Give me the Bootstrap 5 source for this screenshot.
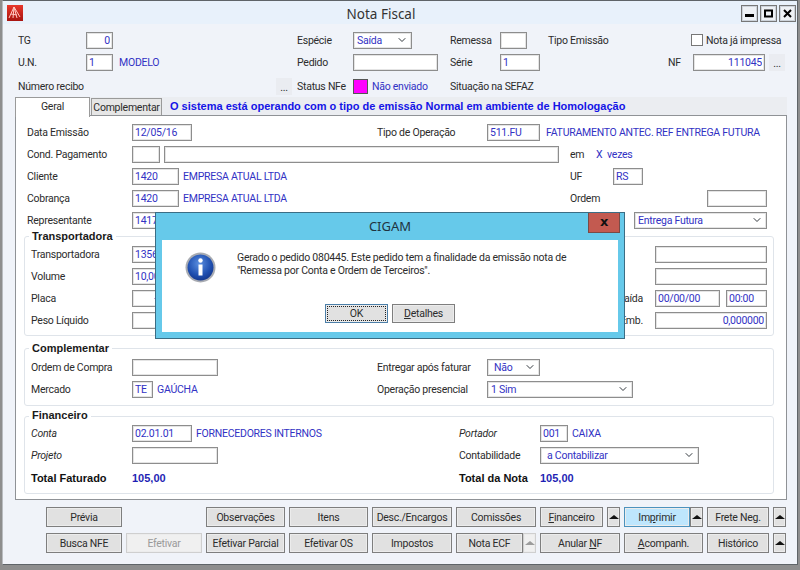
<!DOCTYPE html>
<html lang="pt-BR">
<head>
<meta charset="UTF-8" />
<meta name="viewport" content="width=device-width, initial-scale=1" />
<title>Nota Fiscal</title>
<link href="https://cdn.jsdelivr.net/npm/bootstrap@5.3.0/dist/css/bootstrap.min.css" rel="stylesheet" />
<style>
  body { margin: 0; width: 800px; height: 570px; overflow: hidden; background: #8e8e8e; font: 10.5px/14px Roboto, "Liberation Sans", sans-serif; letter-spacing: -.25px; color: #2c2c2c; }
  .nf-win { position: relative; width: 796px; height: 565px; margin-left: 2px; background: #f0f3f9; border: 1px solid #5f6468; border-left-color: #b9bcc0; overflow: hidden; }
  .nf-title { height: 23px; background: #e8f1fb; position: relative; }
  .nf-title h1 { margin: 0; font: 13.5px/26px "Noto Sans", sans-serif; letter-spacing: 0; color: #333; text-align: center; padding-right: 38px; }
  .nf-logo { position: absolute; left: 4px; top: 4px; }
  .nf-ctl { position: absolute; right: 1px; top: 4px; gap: 2px; }
  .nf-ctl span { width: 17px; height: 17px; border: 1px solid #777; box-shadow: inset 0 0 0 1px #cdd3da; background: #eef1f5; }
  .nf-top { padding: 5px 0 0 15px; }
  .nf-row { display: flex; align-items: center; height: 22px; padding-top: 2px; white-space: nowrap; }
  .nf-row > div { flex: none; }
  .nf-row-b { margin-top: 2px; }
  .blu { color: #3232c4; }
  .form-control.fld, .form-select.fld { flex: none; height: 17px; min-height: 0; margin-top: -2px; padding: 1px 2px 0; font: inherit; letter-spacing: inherit; line-height: 14px; color: #3232c4; border: 1px solid #8d8d8d; border-radius: 0; box-shadow: inset 0 0 0 1px #e4e4e4; background-color: #fff; }
  .form-select.fld { padding-left: 3px; background-size: 10px 8px; background-position: right 4px center; }
  .sel-in { padding-left: 6px !important; }
  .nf-ms6 { margin-left: 6px; }
  .nf-ms5 { margin-left: 5px; }
  .nf-dots { width: 16px; height: 17px; margin-top: -2px; text-align: center; line-height: 20px; background: #eaecf1; }
  .nf-mag { width: 15px; height: 15px; margin-top: -2px; background: #f0f; border: 1px solid #555; }
  .form-check-input.nf-chk { width: 12px; height: 12px; margin: -2px 3px 0 0; border-radius: 0; border-color: #777; float: none; }
  .nav-tabs.nf-tabs { height: 18px; margin-left: 12px; width: 772px; background: #ebedf1; border: 0; flex-wrap: nowrap; position: relative; z-index: 2; }
  .nf-tabs .nav-link { font-size: inherit; line-height: 15px; padding: 1px 0 0; color: #2c2c2c; text-align: center; background: #e6e6e6; border: 1px solid #9a9a9a; border-bottom: 0; border-radius: 0; height: 17px; margin: 1px 0 0 1px; width: 71px; }
  .nf-tabs .nav-link.active { background: #fff; width: 75px; height: 20px; margin: 0; border-color: #9a9a9a; padding-top: 1px; color: #2c2c2c; }
  .nf-msg { font: bold 11px/18px "Liberation Sans", sans-serif; letter-spacing: 0; color: #1414e6; margin-left: 8px; white-space: nowrap; }
  .nf-panel { margin-left: 12px; width: 772px; height: 385px; background: #fff; border: 1px solid #8f9296; padding: 5px 0 0 11px; }
  fieldset.nf-box { position: relative; margin: 5px 0 0 -3px; width: 750px; border: 1px solid #dfe4ea; border-radius: 3px; padding: 6px 0 4px 6px; }
  fieldset.nf-box + fieldset.nf-box { margin-top: 12px; }
  fieldset.nf-box + fieldset.nf-box.b3 { margin-top: 10px; padding-top: 5px; }
  .nf-box legend { position: absolute; left: 4px; top: -8px; width: auto; float: none; margin: 0; padding: 0 3px; background: #fff; font: bold 11px/14px "Liberation Sans", sans-serif; letter-spacing: 0; color: #1a1a1a; }
  .b3 legend { top: -9px; }
  .b2 { height: 58px; padding-top: 7px !important; }
  .b3 { height: 78px; }
  .tot { font: bold 11px/14px "Liberation Sans", sans-serif; letter-spacing: 0; color: #111; }
  .tot.blu { color: #1f1fb4; }
  .nf-btns { display: grid; grid-template-columns: 76px 76px 79px 79px 80px 80px 80px 79px 79px; column-gap: 4px; row-gap: 6px; margin: 7px 0 0 43px; }
  .btn.nf-b { height: 20px; padding: 0; font: inherit; letter-spacing: inherit; line-height: 17px; color: #2c2c2c; background: #e1e1e1; border: 1px solid #7e7e7e; border-radius: 0; box-shadow: inset 0 0 0 1px #ececec; white-space: nowrap; }
  .btn.nf-b.hot { background: #bee6fd; border-color: #4c92bd; }
  .btn.nf-b.dis { color: #9a9a9a; background: #f0f0f0; border-color: #cfcfcf; opacity: 1; }
  .btn.nf-b.arw { flex: none; width: 13px; display: flex; align-items: center; justify-content: center; }
  .nf-tri { width: 0; height: 0; border: 5px solid transparent; border-top: 0; border-bottom: 4px solid #111; }
  .dis .nf-tri { border-bottom-color: #9c9c9c; }
  u { text-decoration: underline; text-underline-offset: 1px; }
  /* dialogo sobre o formulario */
  .modal-content.nf-dlg { position: absolute; left: 152px; top: 211px; width: 470px; height: 127px; background: #66c9ea; border: 1px solid #3b6d84; border-radius: 0; padding: 0 6px 6px; display: block; }
  .nf-dlg .modal-header { height: 27px; padding: 0; border: 0; border-radius: 0; justify-content: center; font: 13px/25px "Noto Sans", sans-serif; letter-spacing: 0; color: #1f3340; }
  .nf-dlg .nf-x { position: absolute; right: 4px; top: 0; width: 32px; height: 20px; background: #c35a50; border: 1px solid #7a4a46; border-top: 0; font: bold 13px/17px "DejaVu Sans", sans-serif; color: #111; text-align: center; }
  .nf-dlg .modal-body { height: 92px; background: #fff; padding: 0; position: relative; flex: none; }
  .nf-dlg .nf-info { position: absolute; left: 23px; top: 12px; }
  .nf-dlg p { position: absolute; left: 75px; top: 11px; margin: 0; line-height: 13px; white-space: nowrap; color: #2c2c2c; }
  .nf-dlg .modal-footer { position: absolute; left: 0; right: 0; top: 64px; padding: 0; border: 0; justify-content: center; gap: 4px; flex-wrap: nowrap; }
  .nf-dlg .btn.nf-b { width: 63px; height: 19px; margin: 0; }
  .btn.nf-b.ok { border-color: #4c7fa8; outline: 1px dotted #222; outline-offset: -3px; }
  .wd16{width:16px}.wd21{width:21px}.wd25{width:25px}.wd26{width:26px}.wd27{width:27px}.wd28{width:28px}.wd30{width:30px}.wd40{width:40px}.wd41{width:41px}.wd43{width:43px}.wd47{width:47px}.wd48{width:48px}.wd50{width:50px}.wd53{width:53px}.wd56{width:56px}.wd59{width:59px}.wd60{width:60px}.wd65{width:65px}.wd68{width:68px}.wd72{width:72px}.wd81{width:81px}.wd85{width:85px}.wd86{width:86px}.wd97{width:97px}.wd101{width:101px}.wd105{width:105px}.wd110{width:110px}.wd112{width:112px}.wd133{width:133px}.wd137{width:137px}.wd143{width:143px}.wd146{width:146px}.wd159{width:159px}.wd168{width:168px}.wd211{width:211px}.wd245{width:245px}.wd258{width:258px}.wd327{width:327px}.wd395{width:395px}.wd438{width:438px}.wd502{width:502px}.wd523{width:523px}
</style>
</head>
<body>
<div class="nf-win">
  <div class="nf-title">
    <svg class="nf-logo" width="16" height="16" viewBox="0 0 16 16"><defs><linearGradient id="lg" x1="0" y1="0" x2="0" y2="1"><stop offset="0" stop-color="#e8382c"/><stop offset="1" stop-color="#a81410"/></linearGradient></defs><rect width="16" height="16" fill="url(#lg)"/><path d="M7 2 2 13M7 2l-1 11M7 2l3 11M7 2l6 10M4 9l6 1" stroke="#ffc9c4" stroke-width="1" fill="none"/></svg>
    <h1>Nota Fiscal</h1>
    <div class="nf-ctl d-flex">
      <span class="d-flex align-items-center justify-content-center"><svg width="9" height="9" viewBox="0 0 9 9"><rect x="0" y="5" width="9" height="3" fill="#000"/></svg></span>
      <span class="d-flex align-items-center justify-content-center"><svg width="9" height="9" viewBox="0 0 9 9"><rect x="1" y="1.5" width="7" height="6" fill="none" stroke="#000" stroke-width="2"/></svg></span>
      <span class="d-flex align-items-center justify-content-center"><svg width="9" height="9" viewBox="0 0 9 9"><path d="M1 1l7 7M8 1 1 8" stroke="#000" stroke-width="2"/></svg></span>
    </div>
  </div>

  <div class="nf-top">
    <div class="nf-row">
      <div class="wd68">TG</div>
      <div class="wd211"><input class="form-control fld wd27 text-end" value="0"></div>
      <div class="wd56">Espécie</div>
      <div class="wd97"><select class="form-select fld wd59"><option>Saída</option></select></div>
      <div class="wd50">Remessa</div>
      <div class="wd48"><input class="form-control fld wd27"></div>
      <div class="wd143">Tipo Emissão</div>
      <div class="d-flex align-items-center"><input class="form-check-input nf-chk" type="checkbox">Nota já impressa</div>
    </div>
    <div class="nf-row">
      <div class="wd68">U.N.</div>
      <div class="wd211 d-flex align-items-center"><input class="form-control fld wd27" value="1"><span class="blu nf-ms6">MODELO</span></div>
      <div class="wd56">Pedido</div>
      <div class="wd97"><input class="form-control fld wd85"></div>
      <div class="wd50">Série</div>
      <div class="wd168"><input class="form-control fld wd40" value="1"></div>
      <div class="wd25">NF</div>
      <div><input class="form-control fld wd72 text-end" value="111045"></div>
      <div class="nf-dots ms-1">...</div>
    </div>
    <div class="nf-row nf-row-b">
      <div class="wd258">Número recibo</div>
      <div class="nf-dots">...</div>
      <div class="wd56 nf-ms5">Status NFe</div>
      <div class="wd97 d-flex align-items-center"><span class="nf-mag"></span><span class="blu ms-1">Não enviado</span></div>
      <div>Situação na SEFAZ</div>
    </div>
  </div>

  <ul class="nav nav-tabs nf-tabs">
    <li class="nav-item"><a class="nav-link active" href="#">Geral</a></li>
    <li class="nav-item"><a class="nav-link" href="#">Complementar</a></li>
    <li class="nf-msg">O sistema está operando com o tipo de emissão Normal em ambiente de Homologação</li>
  </ul>

  <div class="nf-panel">
    <div class="nf-row">
      <div class="wd105">Data Emissão</div>
      <div class="wd245"><input class="form-control fld wd60" value="12/05/16"></div>
      <div class="wd110">Tipo de Operação</div>
      <div class="d-flex align-items-center"><input class="form-control fld wd53" value="511.FU"><span class="blu nf-ms6">FATURAMENTO ANTEC. REF ENTREGA FUTURA</span></div>
    </div>
    <div class="nf-row">
      <div class="wd105">Cond. Pagamento</div>
      <div class="wd438 d-flex"><input class="form-control fld wd28"><input class="form-control fld wd395 ms-1"></div>
      <div class="wd26">em</div>
      <div class="blu">X&nbsp; vezes</div>
    </div>
    <div class="nf-row">
      <div class="wd105">Cliente</div>
      <div class="wd438 d-flex align-items-center"><input class="form-control fld wd47" value="1420"><span class="blu ms-1">EMPRESA ATUAL LTDA</span></div>
      <div class="wd43">UF</div>
      <div><input class="form-control fld wd30" value="RS"></div>
    </div>
    <div class="nf-row">
      <div class="wd105">Cobrança</div>
      <div class="wd438 d-flex align-items-center"><input class="form-control fld wd47" value="1420"><span class="blu ms-1">EMPRESA ATUAL LTDA</span></div>
      <div class="wd137">Ordem</div>
      <div><input class="form-control fld wd60"></div>
    </div>
    <div class="nf-row">
      <div class="wd105">Representante</div>
      <div class="wd502"><input class="form-control fld wd47" value="1417"></div>
      <div><select class="form-select fld wd133"><option>Entrega Futura</option></select></div>
    </div>

    <fieldset class="nf-box">
      <legend>Transportadora</legend>
      <div class="nf-row">
        <div class="wd101">Transportadora</div>
        <div class="wd523"><input class="form-control fld wd47" value="1356"></div>
        <div><input class="form-control fld wd112"></div>
      </div>
      <div class="nf-row">
        <div class="wd101">Volume</div>
        <div class="wd523"><input class="form-control fld wd47" value="10,00"></div>
        <div><input class="form-control fld wd112"></div>
      </div>
      <div class="nf-row">
        <div class="wd101">Placa</div>
        <div class="wd523 d-flex align-items-center justify-content-between pe-2"><input class="form-control fld wd47 text-center" value="-"><span class="me-1">Data Saída</span></div>
        <div class="d-flex"><input class="form-control fld wd65" value="00/00/00"><input class="form-control fld wd41 nf-ms6" value="00:00"></div>
      </div>
      <div class="nf-row">
        <div class="wd101">Peso Líquido</div>
        <div class="wd523 d-flex align-items-center justify-content-between pe-2"><input class="form-control fld wd47"><span class="me-1">Peso Emb.</span></div>
        <div><input class="form-control fld wd112 text-end" value="0,000000"></div>
      </div>
    </fieldset>

    <fieldset class="nf-box b2">
      <legend>Complementar</legend>
      <div class="nf-row">
        <div class="wd101">Ordem de Compra</div>
        <div class="wd245"><input class="form-control fld wd86"></div>
        <div class="wd110">Entregar após faturar</div>
        <div><select class="form-select fld sel-in wd53"><option>Não</option></select></div>
      </div>
      <div class="nf-row">
        <div class="wd101">Mercado</div>
        <div class="wd245 d-flex align-items-center"><input class="form-control fld wd21" value="TE"><span class="blu ms-1">GAÚCHA</span></div>
        <div class="wd110">Operação presencial</div>
        <div><select class="form-select fld wd146"><option>1 Sim</option></select></div>
      </div>
    </fieldset>

    <fieldset class="nf-box b3">
      <legend>Financeiro</legend>
      <div class="nf-row">
        <div class="wd101 fst-italic">Conta</div>
        <div class="wd327 d-flex align-items-center"><input class="form-control fld wd60" value="02.01.01"><span class="blu ms-1">FORNECEDORES INTERNOS</span></div>
        <div class="wd81 fst-italic">Portador</div>
        <div class="d-flex align-items-center"><input class="form-control fld wd28" value="001"><span class="blu ms-1">CAIXA</span></div>
      </div>
      <div class="nf-row">
        <div class="wd101 fst-italic">Projeto</div>
        <div class="wd327"><input class="form-control fld wd86"></div>
        <div class="wd81">Contabilidade</div>
        <div><select class="form-select fld sel-in wd159"><option>a Contabilizar</option></select></div>
      </div>
      <div class="nf-row">
        <div class="wd101 tot">Total Faturado</div>
        <div class="wd327 tot blu">105,00</div>
        <div class="wd81 tot">Total da Nota</div>
        <div class="tot blu">105,00</div>
      </div>
    </fieldset>
  </div>

  <div class="nf-btns">
    <button class="btn nf-b">Prévia</button>
    <div></div>
    <button class="btn nf-b">Observações</button>
    <button class="btn nf-b">Itens</button>
    <button class="btn nf-b">Desc./Encargos</button>
    <button class="btn nf-b">Comissões</button>
    <div class="d-flex gap-1"><button class="btn nf-b flex-fill"><u>F</u>inanceiro</button><button class="btn nf-b arw"><span class="nf-tri"></span></button></div>
    <div class="d-flex"><button class="btn nf-b hot flex-fill">Im<u>p</u>rimir</button><button class="btn nf-b arw"><span class="nf-tri"></span></button></div>
    <div class="d-flex gap-1"><button class="btn nf-b flex-fill">Frete Neg.</button><button class="btn nf-b arw"><span class="nf-tri"></span></button></div>
    <button class="btn nf-b">Busca NFE</button>
    <button class="btn nf-b dis">Efetivar</button>
    <button class="btn nf-b">Efetivar Parcial</button>
    <button class="btn nf-b">Efetivar OS</button>
    <button class="btn nf-b">Impostos</button>
    <div class="d-flex"><button class="btn nf-b flex-fill">Nota ECF</button><button class="btn nf-b arw dis"><span class="nf-tri"></span></button></div>
    <button class="btn nf-b">Anular <u>N</u>F</button>
    <button class="btn nf-b"><u>A</u>companh.</button>
    <div class="d-flex gap-1"><button class="btn nf-b flex-fill">Histórico</button><button class="btn nf-b arw"><span class="nf-tri"></span></button></div>
  </div>

  <div class="modal-content nf-dlg">
    <div class="modal-header">CIGAM</div>
    <div class="nf-x">x</div>
    <div class="modal-body">
      <svg class="nf-info" width="31" height="31" viewBox="0 0 31 31"><defs><radialGradient id="ib" cx=".45" cy=".35" r=".75"><stop offset="0" stop-color="#5b8fe0"/><stop offset=".6" stop-color="#1f4fb0"/><stop offset="1" stop-color="#102f80"/></radialGradient></defs><circle cx="15.5" cy="15.5" r="15" fill="#a9acb2"/><circle cx="15.5" cy="15.5" r="13" fill="url(#ib)"/><circle cx="15.5" cy="8.5" r="2.2" fill="#fff"/><rect x="13.5" y="12.5" width="4" height="11" fill="#fff"/></svg>
      <p>Gerado o pedido 080445. Este pedido tem a finalidade da emissão nota de<br>"Remessa por Conta e Ordem de Terceiros".</p>
      <div class="modal-footer">
        <button class="btn nf-b ok">OK</button>
        <button class="btn nf-b"><u>D</u>etalhes</button>
      </div>
    </div>
  </div>
</div>
</body>
</html>
